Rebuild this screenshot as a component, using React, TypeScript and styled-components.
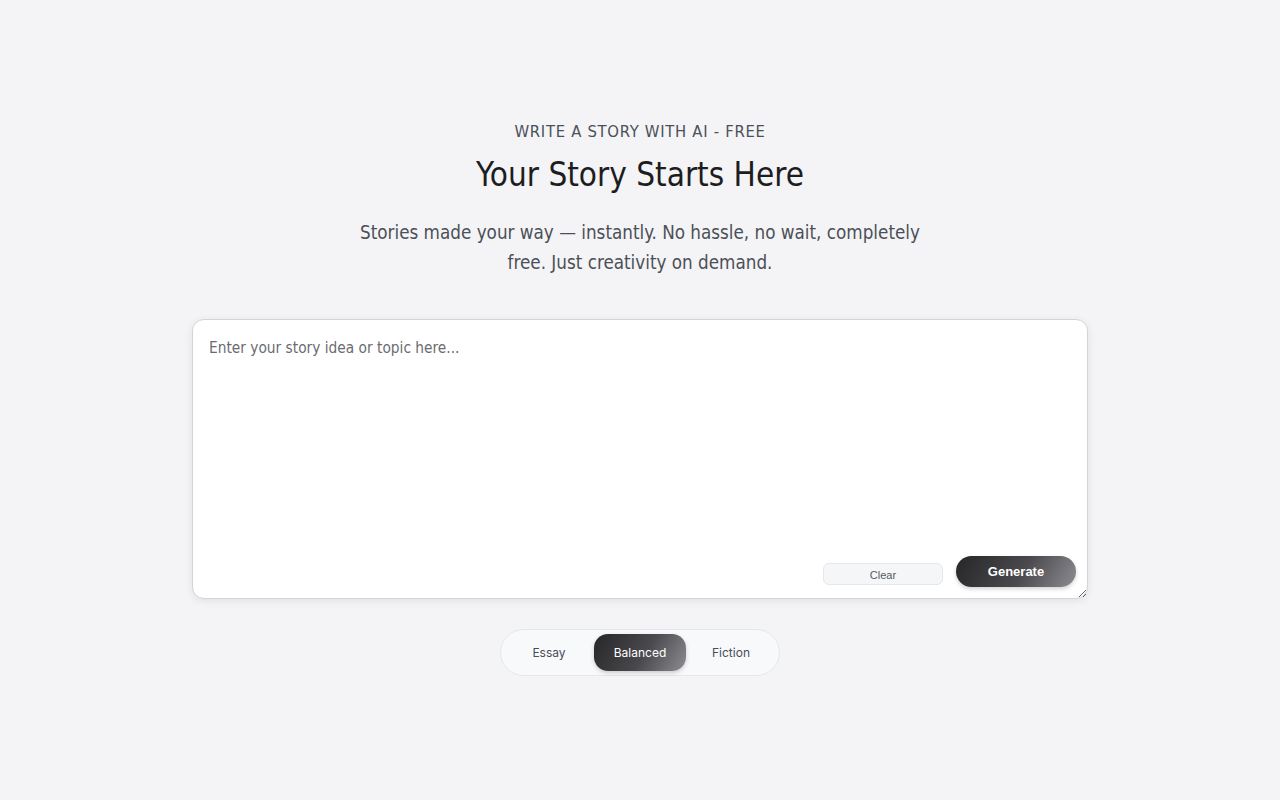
import React, { useState } from "react";
import styled, { createGlobalStyle } from "styled-components";

const Global = createGlobalStyle`
  html, body { margin: 0; padding: 0; background: #f4f4f6; }
  body { font-family: "DejaVu Sans Condensed", "DejaVu Sans", sans-serif; }
  * { box-sizing: border-box; }
`;

const Page = styled.main`
  min-height: 800px;
  display: flex;
  flex-direction: column;
  align-items: center;
  padding-top: 122px;
`;

const Eyebrow = styled.div`
  font-size: 16.5px;
  line-height: 20px;
  letter-spacing: 0.7px;
  color: #4b5058;
  text-transform: uppercase;
`;

const Title = styled.h1`
  margin: 13px 0 0;
  font-size: 33px;
  line-height: 40px;
  font-weight: 400;
  color: #1d1d1f;
`;

const Lead = styled.p`
  margin: 23px 0 0;
  width: 580px;
  text-align: center;
  font-size: 18.7px;
  line-height: 30px;
  color: #4b5058;
`;

const Card = styled.div`
  position: relative;
  margin-top: 41px;
  width: 896px;
  height: 280px;
`;

const Area = styled.textarea`
  display: block;
  width: 100%;
  height: 100%;
  resize: vertical;
  border: 1px solid #d4d4d8;
  border-radius: 12px;
  background: #fff;
  box-shadow: 0 2px 8px rgba(0, 0, 0, 0.08);
  padding: 18px 16px;
  font-family: "DejaVu Sans Condensed", "DejaVu Sans", sans-serif;
  font-size: 15.3px;
  line-height: 20px;
  color: #222;
  outline: none;
  &::placeholder { color: #6b6b70; }
`;

const Actions = styled.div`
  position: absolute;
  right: 12px;
  bottom: 12px;
  display: flex;
  align-items: flex-end;
  gap: 13px;
`;

const ClearBtn = styled.button`
  width: 120px;
  height: 22px;
  margin-bottom: 2px;
  border: 1px solid #e5e7eb;
  border-radius: 6px;
  background: #f5f6f8;
  color: #555a62;
  font-family: "Liberation Sans", Arial, sans-serif;
  font-size: 11px;
  padding: 1px 0 0;
`;

const GenerateBtn = styled.button`
  width: 120px;
  height: 31px;
  border: none;
  border-radius: 999px;
  background: linear-gradient(120deg, #262628 0%, #4a4a4e 55%, #8c8c92 100%);
  box-shadow: 0 2px 4px rgba(0, 0, 0, 0.18);
  color: #fff;
  font-family: "Liberation Sans", Arial, sans-serif;
  font-size: 13px;
  font-weight: 700;
  padding: 0 0 1px;
`;

const Segmented = styled.div`
  margin-top: 30px;
  width: 280px;
  height: 47px;
  border: 1px solid #e6e7ea;
  border-radius: 999px;
  background: #f8f9fb;
  display: flex;
  align-items: center;
  justify-content: center;
`;

const Seg = styled.button<{ $active?: boolean }>`
  height: 37px;
  width: ${(p) => (p.$active ? "92px" : "90px")};
  border: none;
  border-radius: 14px;
  font-family: Inter, "Liberation Sans", sans-serif;
  font-size: 12px;
  color: ${(p) => (p.$active ? "#fff" : "#4a4d55")};
  background: ${(p) =>
    p.$active
      ? "linear-gradient(120deg, #262628 0%, #4a4a4e 55%, #8c8c92 100%)"
      : "transparent"};
  box-shadow: ${(p) => (p.$active ? "0 2px 4px rgba(0,0,0,0.18)" : "none")};
`;

export default function App() {
  const [mode, setMode] = useState("Balanced");
  return (
    <>
      <Global />
      <Page>
        <Eyebrow>Write a story with AI - Free</Eyebrow>
        <Title>Your Story Starts Here</Title>
        <Lead>
          Stories made your way — instantly. No hassle, no wait, completely free. Just
          creativity on demand.
        </Lead>
        <Card>
          <Area placeholder="Enter your story idea or topic here..." />
          <Actions>
            <ClearBtn>Clear</ClearBtn>
            <GenerateBtn>Generate</GenerateBtn>
          </Actions>
        </Card>
        <Segmented>
          {["Essay", "Balanced", "Fiction"].map((m) => (
            <Seg key={m} $active={mode === m} onClick={() => setMode(m)}>
              {m}
            </Seg>
          ))}
        </Segmented>
      </Page>
    </>
  );
}
